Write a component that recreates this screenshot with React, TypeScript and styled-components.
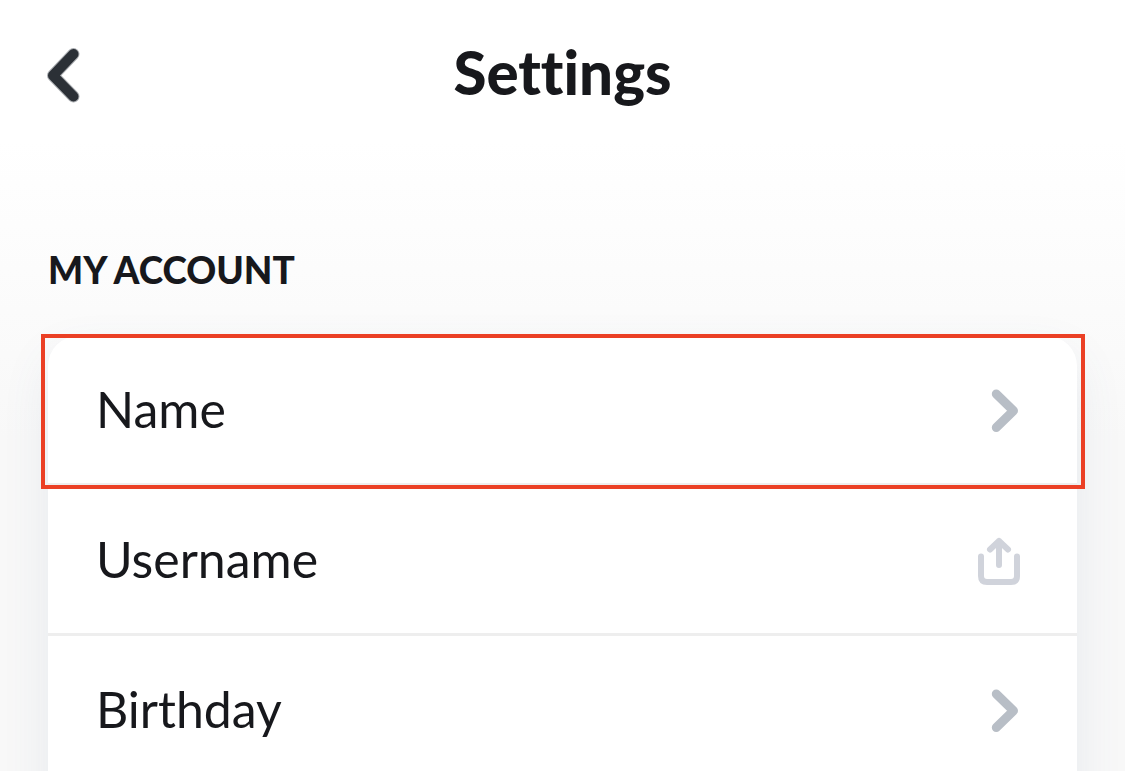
import React from 'react';
import styled, { createGlobalStyle, css } from 'styled-components';

const GlobalStyle = createGlobalStyle`
  *, *::before, *::after {
    box-sizing: border-box;
  }
  body {
    margin: 0;
    background: #f8f8f8;
    color: #17181c;
    font-family: Lato, "Open Sans", sans-serif;
    font-variant-ligatures: none;
  }
`;

const Page = styled.div`
  height: 100vh;
  overflow: hidden;
  background: linear-gradient(#ffffff 140px, #f8f8f8 440px);
`;

const Header = styled.header`
  display: grid;
  grid-template-columns: 56px 1fr 56px;
  align-items: center;
  height: 150px;
  padding: 0 36px;
`;

const BackButton = styled.button`
  display: flex;
  align-items: center;
  justify-content: center;
  width: 56px;
  height: 72px;
  padding: 0;
  border: 0;
  background: none;
  cursor: pointer;
`;

const Title = styled.h1`
  margin: 0;
  padding-bottom: 6px;
  font-size: 60px;
  line-height: 72px;
  font-weight: 900;
  text-align: center;
`;

const Section = styled.section`
  padding: 96px 48px 0;
`;

const SectionTitle = styled.h2`
  margin: 0 0 42px;
  font-size: 37px;
  line-height: 48px;
  font-weight: 900;
  text-transform: uppercase;
`;

const Card = styled.ul`
  margin: 0;
  padding: 0 0 48px;
  list-style: none;
  background: #ffffff;
  border-radius: 30px;
  box-shadow: 0 20px 48px rgba(80, 110, 150, 0.1);
`;

const Item = styled.li<{ $highlighted?: boolean }>`
  position: relative;
  border-bottom: 3px solid #eeeeee;

  &:last-child {
    border-bottom: 0;
  }

  ${({ $highlighted }) =>
    $highlighted &&
    css`
      &::after {
        content: '';
        position: absolute;
        z-index: 1;
        inset: -2px -8px -6px -7px;
        border: 4px solid #eb4025;
        pointer-events: none;
      }
    `}
`;

const RowButton = styled.button`
  display: flex;
  align-items: center;
  justify-content: space-between;
  width: 100%;
  height: 147px;
  padding: 0 54px 0 48px;
  border: 0;
  background: none;
  color: inherit;
  font: inherit;
  font-size: 50px;
  line-height: 60px;
  text-align: left;
  cursor: pointer;
`;

const Label = styled.span`
  padding-bottom: 2px;
`;

const BackIcon = () => (
  <svg width="40" height="60" viewBox="0 0 40 60" fill="none" aria-hidden="true">
    <path
      d="M29.500 9 9 30.500 29.500 51.500"
      stroke="#a9acb0"
      strokeWidth="12"
      strokeLinecap="round"
      strokeLinejoin="round"
    />
    <path
      d="M29.500 9 9 30.500 29.500 51.500"
      stroke="#2b3036"
      strokeWidth="10"
      strokeLinecap="round"
      strokeLinejoin="round"
    />
  </svg>
);

const ChevronIcon = () => (
  <svg width="36" height="44" viewBox="0 0 36 44" fill="none" aria-hidden="true">
    <path
      d="M9.300 6 26.500 22.700 9.300 39.500"
      stroke="#b8bec6"
      strokeWidth="9"
      strokeLinecap="round"
      strokeLinejoin="round"
    />
  </svg>
);

const ShareIcon = () => (
  <svg width="48" height="50" viewBox="0 0 48 50" fill="none" aria-hidden="true">
    <path
      d="M6 21.500V41Q6 47 12 47H36Q42 47 42 41V21.500M24 30V6M15 14.500 24 6 33 14.500"
      stroke="#d0d3db"
      strokeWidth="6"
      strokeLinecap="round"
      strokeLinejoin="round"
    />
  </svg>
);

type Row = { label: string; icon: 'chevron' | 'share'; highlighted?: boolean };

const rows: Row[] = [
  { label: 'Name', icon: 'chevron', highlighted: true },
  { label: 'Username', icon: 'share' },
  { label: 'Birthday', icon: 'chevron' },
];

export default function App() {
  return (
    <>
      <GlobalStyle />
      <Page>
        <Header>
          <BackButton type="button" aria-label="Back">
            <BackIcon />
          </BackButton>
          <Title>Settings</Title>
        </Header>
        <Section aria-labelledby="account-title">
          <SectionTitle id="account-title">My Account</SectionTitle>
          <Card>
            {rows.map(({ label, icon, highlighted }) => (
              <Item key={label} $highlighted={highlighted}>
                <RowButton type="button">
                  <Label>{label}</Label>
                  {icon === 'share' ? <ShareIcon /> : <ChevronIcon />}
                </RowButton>
              </Item>
            ))}
          </Card>
        </Section>
      </Page>
    </>
  );
}
